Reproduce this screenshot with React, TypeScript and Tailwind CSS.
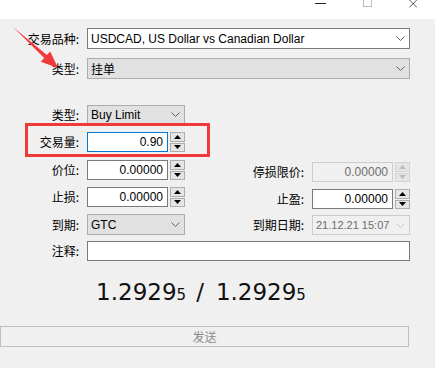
import React from "react";

const cjk = { fontFamily: '"Noto Sans CJK SC", "Noto Sans", sans-serif' };
const ui = { fontFamily: '"Liberation Sans", "Noto Sans CJK SC", sans-serif' };

function Chevron({ color = "#555" }: { color?: string }) {
  return (
    <svg width="9" height="5" viewBox="0 0 9 5" className="shrink-0">
      <polyline points="0.5,0.5 4.5,4.5 8.5,0.5" fill="none" stroke={color} strokeWidth="1" />
    </svg>
  );
}

function Label({ text, w = "w-[79px]" }: { text: string; w?: string }) {
  return (
    <div className={`${w} text-right text-[12px] text-black leading-none shrink-0`} style={cjk}>
      {text}
    </div>
  );
}

function Spinner({ disabled }: { disabled?: boolean }) {
  const c = disabled ? "#bdbdbd" : "#000";
  const b = disabled ? "border-[#d4d4d4]" : "border-[#adadad]";
  return (
    <div className="flex flex-col gap-[1px] w-[15px] h-[20px] shrink-0">
      <div className={`flex-1 border ${b} bg-[#e5e5e5] flex items-center justify-center`}>
        <svg width="7" height="4" viewBox="0 0 7 4">
          <polygon points="0,4 7,4 3.5,0" fill={c} />
        </svg>
      </div>
      <div className={`flex-1 border ${b} bg-[#e5e5e5] flex items-center justify-center`}>
        <svg width="7" height="4" viewBox="0 0 7 4">
          <polygon points="0,0 7,0 3.5,4" fill={c} />
        </svg>
      </div>
    </div>
  );
}

function NumInput({ value, disabled, focus }: { value: string; disabled?: boolean; focus?: boolean }) {
  return (
    <div className="flex items-center gap-[2px]">
      <div
        className={`w-[81px] h-[20px] border flex items-center justify-end pr-[4px] text-[12px] ${
          disabled
            ? "border-[#cccccc] bg-[#f0f0f0] text-[#6d6d6d]"
            : focus
            ? "border-[#0078d7] bg-white text-black"
            : "border-[#7a7a7a] bg-white text-black"
        }`}
        style={ui}
      >
        {value}
      </div>
      <Spinner disabled={disabled} />
    </div>
  );
}

function Combo({
  value,
  w,
  h = "h-[21px]",
  white,
  disabled,
  small,
}: {
  value: string;
  w: string;
  h?: string;
  white?: boolean;
  disabled?: boolean;
  small?: boolean;
}) {
  return (
    <div
      className={`${w} ${h} border flex items-center justify-between pl-[3px] pr-[4px] whitespace-nowrap ${
        small ? "text-[11px]" : "text-[12px]"
      } ${
        disabled
          ? "border-[#cccccc] bg-[#f0f0f0] text-[#6d6d6d]"
          : white
          ? "border-[#7a7a7a] bg-white text-black"
          : "border-[#adadad] bg-[#e1e1e1] text-black"
      }`}
      style={/[\u4e00-\u9fff]/.test(value) ? cjk : ui}
    >
      <span className="leading-none">{value}</span>
      <Chevron color={disabled ? "#c4c4c4" : "#606060"} />
    </div>
  );
}

export default function App() {
  return (
    <div className="relative w-[435px] h-[368px] bg-[#f0f0f0] overflow-hidden">
      {/* window title bar */}
      <div className="h-[19px] bg-white flex items-start">
        <div className="w-[315px]" />
        <div className="w-[11px] h-[1px] bg-[#222] mt-[3px]" />
        <div className="w-[37px]" />
        <div className="w-[9px] h-[7px] border border-t-0 border-[#bbb]" />
        <div className="w-[36px]" />
        <svg width="11" height="8" viewBox="0 -3 11 11">
          <path d="M0 -3 L10 7 M10 -3 L0 7" stroke="#222" strokeWidth="1" />
        </svg>
      </div>

      <div className="flex flex-col pt-[9px]">
        <div className="flex items-center gap-[8px]">
          <Label text="交易品种:" />
          <Combo value="USDCAD, US Dollar vs Canadian Dollar" w="w-[323px]" white />
        </div>
        <div className="flex items-center gap-[8px] mt-[9px]">
          <Label text="类型:" />
          <Combo value="挂单" w="w-[323px]" />
        </div>

        <div className="flex items-center gap-[8px] mt-[26px]">
          <Label text="类型:" />
          <Combo value="Buy Limit" w="w-[98px]" h="h-[19px]" />
        </div>

        <div className="flex items-center gap-[8px] mt-[8px]">
          <Label text="交易量:" />
          <NumInput value="0.90" focus />
        </div>

        <div className="flex items-start mt-[8px]">
          <div className="flex items-center gap-[8px] w-[225px]">
            <Label text="价位:" />
            <NumInput value="0.00000" />
          </div>
          <div className="flex items-center gap-[8px] mt-[2px]">
            <Label text="停损限价:" />
            <NumInput value="0.00000" disabled />
          </div>
        </div>

        <div className="flex items-start mt-[5px]">
          <div className="flex items-center gap-[8px] w-[225px]">
            <Label text="止损:" />
            <NumInput value="0.00000" />
          </div>
          <div className="flex items-center gap-[8px] mt-[2px]">
            <Label text="止盈:" />
            <NumInput value="0.00000" />
          </div>
        </div>

        <div className="flex items-start mt-[5px]">
          <div className="flex items-center gap-[8px] w-[225px]">
            <Label text="到期:" />
            <Combo value="GTC" w="w-[98px]" />
          </div>
          <div className="flex items-center gap-[8px] mt-[1px]">
            <Label text="到期日期:" />
            <Combo value="21.12.21 15:07" w="w-[98px]" h="h-[20px]" disabled small />
          </div>
        </div>

        <div className="flex items-center gap-[8px] mt-[6px]">
          <Label text="注释:" />
          <div className="w-[323px] h-[20px] border border-[#7a7a7a] bg-white" />
        </div>

        <div
          className="flex items-baseline justify-center w-[402px] mt-[20px] text-[#111] leading-none"
          style={{ fontFamily: '"DejaVu Sans", sans-serif' }}
        >
          <span className="text-[23px]">1.2929</span>
          <span className="text-[15px]">5</span>
          <span className="text-[23px] ml-[10px] mr-[12px]">/</span>
          <span className="text-[23px]">1.2929</span>
          <span className="text-[15px]">5</span>
        </div>

        <div
          className="mt-[22px] w-[409px] h-[21px] border border-[#bfbfbf] bg-[#f0f0f0] flex items-center justify-center text-[12px] text-[#8a8a8a]"
          style={cjk}
        >
          发送
        </div>
      </div>

      {/* annotation: highlight box */}
      <div className="absolute left-[25px] top-[123px] w-[185px] h-[34px] border-[3px] border-[#f03a3a]" />
      {/* annotation: arrow */}
      <svg className="absolute left-0 top-0" width="80" height="80" viewBox="0 0 80 80">
        <polygon points="13,27 46.8,55.1 50.2,51.4 58,68 40.8,61.8 44.2,58.1" fill="#f03a3a" />
      </svg>
    </div>
  );
}
